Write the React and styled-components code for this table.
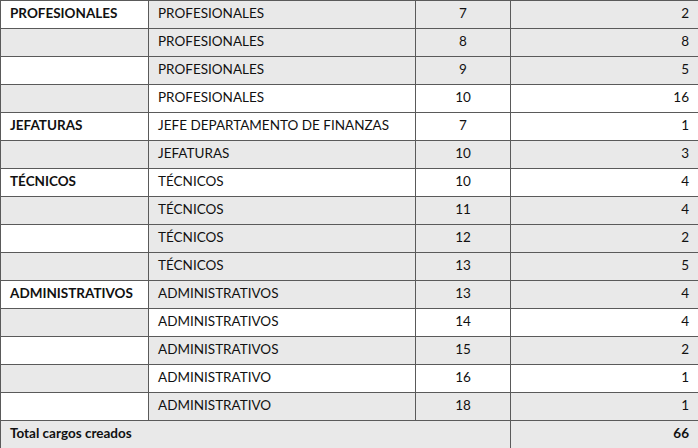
import styled, { createGlobalStyle } from "styled-components";

const Global = createGlobalStyle`
  body {
    margin: 0;
    background: #fff;
    font-family: Lato, "Liberation Sans", sans-serif;
  }
`;

const Table = styled.table`
  width: 698px;
  border-collapse: collapse;
  table-layout: fixed;
  color: #111;
  font-size: 13.5px;
`;

const Col = styled.col`
  width: ${(p) => p.$w}px;
`;

const Cell = styled.td`
  height: 28px;
  padding: 0 9px 3px;
  border: 1px solid #5a5a5a;
  background: ${(p) => (p.$shade ? "#e9e9e9" : "#fff")};
  text-align: ${(p) => p.$align || "left"};
  font-weight: ${(p) => (p.$bold ? 700 : 400)};
  white-space: nowrap;
  vertical-align: middle;
  box-sizing: border-box;
`;

// [grupo, cargo, grado, cantidad, sombreado por columna]
const rows = [
  ["PROFESIONALES", "PROFESIONALES", 7, 2, "WGGG"],
  ["", "PROFESIONALES", 8, 8, "GGGG"],
  ["", "PROFESIONALES", 9, 5, "WGGG"],
  ["", "PROFESIONALES", 10, 16, "GWWW"],
  ["JEFATURAS", "JEFE DEPARTAMENTO DE FINANZAS", 7, 1, "WWWW"],
  ["", "JEFATURAS", 10, 3, "GGGG"],
  ["TÉCNICOS", "TÉCNICOS", 10, 4, "WWWW"],
  ["", "TÉCNICOS", 11, 4, "GGGG"],
  ["", "TÉCNICOS", 12, 2, "WGGG"],
  ["", "TÉCNICOS", 13, 5, "GGGG"],
  ["ADMINISTRATIVOS", "ADMINISTRATIVOS", 13, 4, "WGGG"],
  ["", "ADMINISTRATIVOS", 14, 4, "GWWW"],
  ["", "ADMINISTRATIVOS", 15, 2, "WGGG"],
  ["", "ADMINISTRATIVO", 16, 1, "GWWW"],
  ["", "ADMINISTRATIVO", 18, 1, "WGGG"],
];

export default function App() {
  return (
    <>
      <Global />
      <Table>
        <colgroup>
          <Col $w={148} />
          <Col $w={267} />
          <Col $w={95} />
          <Col $w={188} />
        </colgroup>
        <tbody>
          {rows.map(([grupo, cargo, grado, cant, shade], i) => (
            <tr key={i}>
              <Cell $bold $shade={shade[0] === "G"}>{grupo}</Cell>
              <Cell $shade={shade[1] === "G"}>{cargo}</Cell>
              <Cell $align="center" $shade={shade[2] === "G"}>{grado}</Cell>
              <Cell $align="right" $shade={shade[3] === "G"}>{cant}</Cell>
            </tr>
          ))}
          <tr>
            <Cell colSpan={3} $bold $shade>Total cargos creados</Cell>
            <Cell $align="right" $bold $shade>66</Cell>
          </tr>
        </tbody>
      </Table>
    </>
  );
}
